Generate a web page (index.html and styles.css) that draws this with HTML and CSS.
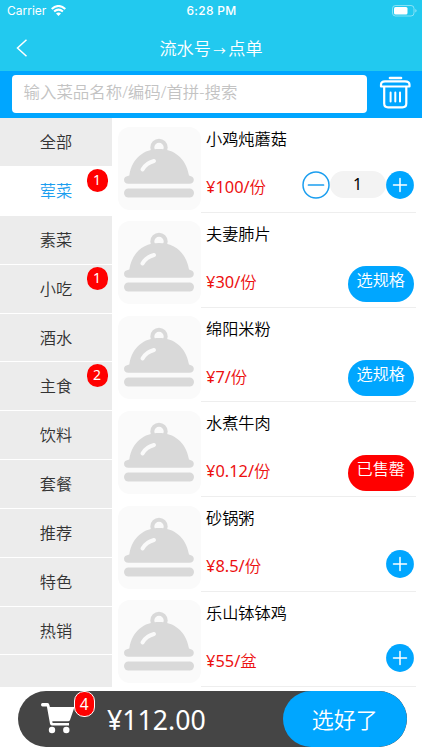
FILE: index.html
```
<!DOCTYPE html>
<html lang="zh-CN">
<head>
<meta charset="utf-8">
<title>点单</title>
<link rel="stylesheet" href="styles.css">
</head>
<body>
<svg width="0" height="0" class="defs">
  <symbol id="dish" viewBox="0 0 83 83">
    <circle cx="41" cy="20.500" r="6.700" fill="none" stroke="#d9d9d9" stroke-width="4"/>
    <path d="M11.300 48.500C14 31 26 22 41 22s27 9 30 26.500c3 .7 4.800 2 4.800 4.200 0 2.500-1.800 4-4.300 4H10.300c-2.500 0-4.300-1.500-4.300-4 0-2.200 1.800-3.500 5.300-4.200Z" fill="#d9d9d9"/>
    <rect x="6" y="61.500" width="70" height="9" rx="4.500" fill="#d9d9d9"/>
    <path d="M24.500 42.500Q28 36 36 34" fill="none" stroke="#fafafa" stroke-width="4" stroke-linecap="round"/>
  </symbol>
  <symbol id="plus" viewBox="0 0 28 28">
    <circle cx="14" cy="14" r="13.900" fill="#00a6ff"/>
    <path d="M7.500 14h13M14 7.500v13" stroke="#fff" stroke-width="1.500" stroke-linecap="round"/>
  </symbol>
</svg>
<div class="app">
  <header class="header">
    <div class="status">
      <div class="carrier"><span>Carrier</span>
        <svg width="15" height="11" viewBox="0 0 15 11" fill="none" stroke="#fff" stroke-width="2"><path d="M.7 4.100Q7.500-2.200 14.300 4.100M3.100 6.600Q7.500 2.600 11.900 6.600"/><path d="M7.500 11 5 8.400Q7.500 6.400 10 8.400Z" fill="#fff" stroke="none"/></svg>
      </div>
      <span class="clock">6:28 PM</span>
      <svg class="battery" width="25" height="12" viewBox="0 0 25 12"><rect x=".5" y=".5" width="21.500" height="10.500" rx="3" fill="none" stroke="#fff" stroke-opacity=".45"/><rect x="2" y="2" width="13.500" height="7.500" rx="1.500" fill="#fff"/><path d="M23.300 4v3.500q1.300-.5 1.300-1.750T23.300 4Z" fill="#fff" fill-opacity=".5"/></svg>
    </div>
    <div class="nav">
      <svg class="back" width="12" height="18" viewBox="0 0 12 18" fill="none" stroke="#fff" stroke-width="1.500"><path d="M10.500 .8 1.500 9l9 8.200"/></svg>
      <h1>流水号<span class="arrow">→</span>点单</h1>
    </div>
  </header>
  <div class="search">
    <div class="field">输入菜品名称/编码/首拼-搜索</div>
    <svg class="trash" width="32" height="34" viewBox="0 0 32 34" fill="none" stroke="#fff" stroke-width="2.200" stroke-linecap="round" stroke-linejoin="round"><path d="M11 2h11" stroke-width="2.600"/><path d="M2 10.500V8.800Q2 5.400 6 5.400H26Q30.500 5.400 30.500 8.800V10.500Z"/><path d="M5.200 11V27.500Q5.200 31.300 9 31.300H23.500Q27.300 31.300 27.300 27.500V11"/><path d="M11.600 16.500v9M16.300 16.500v9M21 16.500v9" stroke-width="2"/></svg>
  </div>
  <main class="content">
    <nav class="side">
      <div class="cat">全部</div>
      <div class="cat active">荤菜<span class="badge">1</span></div>
      <div class="cat">素菜</div>
      <div class="cat">小吃<span class="badge">1</span></div>
      <div class="cat">酒水</div>
      <div class="cat">主食<span class="badge">2</span></div>
      <div class="cat">饮料</div>
      <div class="cat">套餐</div>
      <div class="cat">推荐</div>
      <div class="cat">特色</div>
      <div class="cat">热销</div>
      <div class="cat rest"></div>
    </nav>
    <section class="list">
      <article class="item"><div class="thumb"><svg><use href="#dish"/></svg></div><div class="info"><h2>小鸡炖蘑菇</h2><div class="row"><span class="price">¥100/<span class="unit">份</span></span>
        <div class="stepper"><svg class="round" viewBox="0 0 28 28"><circle cx="14" cy="14" r="13" fill="#fff" stroke="#1b9eef" stroke-width="1.500"/><path d="M6.500 14h15" stroke="#1b9eef" stroke-width="1.700" stroke-linecap="round"/></svg><span class="qty">1</span><svg class="round"><use href="#plus"/></svg></div></div></div></article>
      <article class="item"><div class="thumb"><svg><use href="#dish"/></svg></div><div class="info"><h2>夫妻肺片</h2><div class="row"><span class="price">¥30/<span class="unit">份</span></span><span class="pill">选规格</span></div></div></article>
      <article class="item"><div class="thumb"><svg><use href="#dish"/></svg></div><div class="info"><h2>绵阳米粉</h2><div class="row"><span class="price">¥7/<span class="unit">份</span></span><span class="pill">选规格</span></div></div></article>
      <article class="item"><div class="thumb"><svg><use href="#dish"/></svg></div><div class="info"><h2>水煮牛肉</h2><div class="row"><span class="price">¥0.12/<span class="unit">份</span></span><span class="pill sold">已售罄</span></div></div></article>
      <article class="item"><div class="thumb"><svg><use href="#dish"/></svg></div><div class="info"><h2>砂锅粥</h2><div class="row"><span class="price">¥8.5/<span class="unit">份</span></span><svg class="round"><use href="#plus"/></svg></div></div></article>
      <article class="item"><div class="thumb"><svg><use href="#dish"/></svg></div><div class="info"><h2>乐山钵钵鸡</h2><div class="row"><span class="price">¥55/<span class="unit">盆</span></span><svg class="round"><use href="#plus"/></svg></div></div></article>
    </section>
  </main>
  <footer class="footer">
    <div class="bar">
      <div class="cart">
        <svg width="34" height="32" viewBox="0 0 34 32" fill="#fff"><path d="M1.500 0H6.500Q8 0 8.400 2L8.900 4H33.500L29 17Q28.500 18.300 27 18.300H11.300L11.600 20H28V22.500H11Q9.300 22.500 9 20.700L5.900 3.500H1.500Q0 3.500 0 1.750T1.500 0Z"/><circle cx="11" cy="27" r="3.200"/><circle cx="25.300" cy="27" r="3.200"/></svg>
        <span class="count">4</span>
      </div>
      <span class="total">¥112.00</span>
      <div class="done">选好了</div>
    </div>
  </footer>
</div>
</body>
</html>
```
FILE: styles.css
```
* { box-sizing: border-box; }
body { margin: 0; background: #fff; font-family: "Noto Sans", "Noto Sans CJK SC DemiLight", "Noto Sans CJK SC", sans-serif; font-weight: 350; }
h1, h2 { margin: 0; font-weight: inherit; }
svg { display: block; flex: none; }
.defs { position: absolute; }
.app { width: 422px; height: 750px; display: flex; flex-direction: column; overflow: hidden; }
.header { height: 70.500px; background: #22c9ef; color: #fff; }
.status { height: 22px; padding: 0 6px 0 7px; display: grid; grid-template-columns: 1fr auto 1fr; align-items: center; font: 12px/22px Inter, sans-serif; }
.carrier { display: flex; gap: 5px; align-items: center; letter-spacing: 0; }
.carrier svg { margin-top: -1px; }
.clock { font-weight: 500; letter-spacing: .3px; }
.battery { justify-self: end; margin-right: -1px; }
.nav { height: 48px; display: grid; grid-template-columns: 1fr auto 1fr; align-items: center; padding-left: 16px; padding-right: 16px; }
.back { margin-top: 4px; }
h1 { font-size: 17.200px; line-height: 24px; height: 24px; margin-top: 5px; display: flex; }
.arrow { width: 17.200px; font-family: "Noto Sans CJK SC", sans-serif; font-size: 12.500px; line-height: 27px; text-align: center; }
.search { height: 47.700px; background: #00a6ff; display: flex; align-items: center; padding: 0 11px 1px 11.500px; justify-content: space-between; }
.trash { margin-top: -1px; }
.field { width: 355.500px; height: 38px; border-radius: 4px; background: #fff; color: #c3c3c3; font-size: 16.450px; line-height: 25px; padding: 4px 12px; white-space: nowrap; }
.content { height: 569px; display: flex; }
.side { width: 112px; flex: none; display: flex; flex-direction: column; overflow: hidden; }
.cat { position: relative; height: 48.850px; flex: none; border-bottom: 1.200px solid #fff; background: #ececec; color: #333; font-size: 16.200px; line-height: 49px; text-align: center; }
.active { background: #fff; color: #1b9eef; }
.rest { flex: 1; height: auto; border: 0; }
.badge { position: absolute; right: 4.500px; top: 2px; width: 21px; height: 23px; border-radius: 11px; background: #f00; color: #fff; font-size: 14px; font-weight: 400; line-height: 21px; }
.list { flex: 1; padding: 0 6px 0 5.500px; }
.item { display: flex; height: 94.750px; }
.thumb { width: 83px; height: 83px; margin-top: 8.500px; border-radius: 12px; background: #fafafa; flex: none; }
.thumb svg { width: 83px; height: 83px; }
.info { flex: 1; padding: 9px 2.500px 0 5.500px; border-bottom: 1px solid #eee; }
h2 { font-size: 16.200px; line-height: 25px; height: 24px; color: #000; }
.row { height: 36px; margin-top: 15px; display: flex; align-items: center; justify-content: space-between; padding-top: 1px; }
.price { color: #ec1010; font-size: 16.400px; font-weight: 400; line-height: 24px; padding-top: 5px; }
.unit { font-weight: 350; }
.stepper { display: flex; }
.round { width: 28px; height: 28px; }
.qty { width: 56px; height: 27px; margin-top: .5px; border-radius: 14px; background: #f3f3f3; text-align: center; font-size: 16px; font-weight: 400; line-height: 27px; }
.pill { width: 65.500px; height: 36px; border-radius: 18px; margin-top: 8.500px; background: #00a6ff; color: #fff; font-size: 16.200px; line-height: 29px; text-align: center; flex: none; }
.sold { background: #f00; }
.footer { padding: 4px 15.500px 0 17.500px; }
.bar { height: 56px; border-radius: 28px; background: #454545; display: flex; color: #fff; overflow: hidden; }
.cart { position: relative; width: 89.500px; padding: 12px 0 0 23px; flex: none; }
.count { position: absolute; left: 56px; top: 0; width: 21.500px; height: 26px; border: 1px solid #fff; border-radius: 10px; background: #f00; font-size: 15.500px; font-weight: 400; line-height: 24px; text-align: center; }
.total { flex: 1; font-size: 26.700px; font-weight: 400; line-height: 57px; }
.done { width: 123.500px; border-radius: 28px; background: #00a6ff; font-size: 22px; line-height: 57px; text-align: center; }
```
